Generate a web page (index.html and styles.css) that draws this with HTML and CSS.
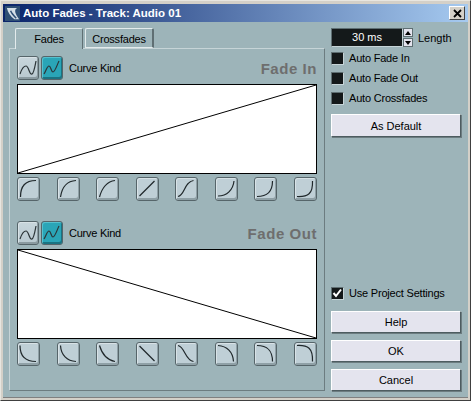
FILE: index.html
```html
<!DOCTYPE html>
<html lang="en">
<head>
	<meta charset="UTF-8">
	<title>Auto Fades - Track: Audio 01</title>
	<link rel="stylesheet" href="styles.css">
</head>
<body>
	<div class="window">
		<div class="titlebar">
			<svg class="titlebar__icon" viewBox="0 0 16 16">
				<rect width="16" height="16" fill="#2f4f74"/>
				<path d="M2 2 L13 2 C9 4 11 8 15 14 L10 14 C6 11 3 7 2 2 Z" fill="#d5dfe6"/>
				<path d="M6 5 C7 8 9 10 12 13" stroke="#2f4f74" stroke-width="1.6" fill="none"/>
			</svg>
			<div class="titlebar__text">Auto Fades - Track: Audio 01</div>
			<button class="titlebar__close">
				<svg viewBox="0 0 9 9" width="9" height="9"><path d="M1 1 L8 8 M8 1 L1 8" stroke="#000" stroke-width="1.8"/></svg>
			</button>
		</div>

		<div class="content">
			<div class="left">
				<div class="tabs">
					<div class="tab tab--active">Fades</div>
					<div class="tab">Crossfades</div>
				</div>
				<div class="panel">
					<div class="section">
						<div class="section__head">
							<button class="kind"><svg viewBox="1 1 20 22"><path d="M3 18 C5 12 7 10 9 10 C12 10 12 19 15 18 C17 17 18 10 19 5"/></svg></button>
							<button class="kind kind--on"><svg viewBox="1 1 20 22"><path d="M3 18 C5 15 6 10 8 10 C10 10 10 16 12 16 C14 16 16 9 18 5"/></svg></button>
							<div class="section__label">Curve Kind</div>
							<div class="section__title">Fade In</div>
						</div>
						<div class="graph">
							<svg viewBox="0 0 298 88" preserveAspectRatio="none"><line x1="0" y1="88" x2="298" y2="0"/></svg>
						</div>
						<div class="curves">
							<button class="curve"><svg viewBox="1 1 21 22"><path d="M3.5 20 C3.5 9 8 3.5 19 3.5"/></svg></button>
							<button class="curve"><svg viewBox="1 1 21 22"><path d="M3.5 20 C5 10 10 4 19 3.5"/></svg></button>
							<button class="curve"><svg viewBox="1 1 21 22"><path d="M3.5 20 C6 11 11 4.5 19 3.5"/></svg></button>
							<button class="curve"><svg viewBox="1 1 21 22"><path d="M3.5 19 L18.5 4"/></svg></button>
							<button class="curve"><svg viewBox="1 1 21 22"><path d="M3 19.5 C10 18 9 5 18.5 3.5"/></svg></button>
							<button class="curve"><svg viewBox="1 1 21 22"><path d="M3 19 C12 19 18 13 19 4"/></svg></button>
							<button class="curve"><svg viewBox="1 1 21 22"><path d="M3 19.5 C13 19.5 18.5 15 18.5 4"/></svg></button>
							<button class="curve"><svg viewBox="1 1 21 22"><path d="M3 19.5 C14 20 19 17 18.5 4"/></svg></button>
						</div>
					</div>

					<div class="section">
						<div class="section__head">
							<button class="kind"><svg viewBox="1 1 20 22"><path d="M3 18 C5 12 7 10 9 10 C12 10 12 19 15 18 C17 17 18 10 19 5"/></svg></button>
							<button class="kind kind--on"><svg viewBox="1 1 20 22"><path d="M3 18 C5 15 6 10 8 10 C10 10 10 16 12 16 C14 16 16 9 18 5"/></svg></button>
							<div class="section__label">Curve Kind</div>
							<div class="section__title">Fade Out</div>
						</div>
						<div class="graph">
							<svg viewBox="0 0 298 88" preserveAspectRatio="none"><line x1="0" y1="0" x2="298" y2="88"/></svg>
						</div>
						<div class="curves">
							<button class="curve"><svg viewBox="1 1 21 22"><path d="M3 3.5 C3 14 8 19.5 19 19.5"/></svg></button>
							<button class="curve"><svg viewBox="1 1 21 22"><path d="M3.5 3.5 C4 13 10 19 19 19.5"/></svg></button>
							<button class="curve"><svg viewBox="1 1 21 22"><path d="M3.5 3.5 C6 12 11 18 19 19.5"/></svg></button>
							<button class="curve"><svg viewBox="1 1 21 22"><path d="M3.5 4 L18.5 19"/></svg></button>
							<button class="curve"><svg viewBox="1 1 21 22"><path d="M3 3.5 C10 5 10 18 18.5 19.5"/></svg></button>
							<button class="curve"><svg viewBox="1 1 21 22"><path d="M3 3.5 C12 4 18 10 18.5 19.5"/></svg></button>
							<button class="curve"><svg viewBox="1 1 21 22"><path d="M3 3.5 C13 3.5 18.5 8 18.5 19.5"/></svg></button>
							<button class="curve"><svg viewBox="1 1 21 22"><path d="M3 3.5 C14 3 19 6 18.5 19.5"/></svg></button>
						</div>
					</div>
				</div>
			</div>

			<div class="right">
				<div class="right__top">
					<div class="length">
						<div class="length__value">30 ms</div>
						<div class="spinner">
							<div class="spinner__btn"><span class="arrow arrow--up"></span></div>
							<div class="spinner__btn"><span class="arrow arrow--down"></span></div>
						</div>
						<div class="length__label">Length</div>
					</div>
					<div class="check"><span class="check__box"></span>Auto Fade In</div>
					<div class="check"><span class="check__box"></span>Auto Fade Out</div>
					<div class="check"><span class="check__box"></span>Auto Crossfades</div>
					<button class="btn btn--default">As Default</button>
				</div>
				<div class="right__bottom">
					<div class="check check--project">
						<span class="check__box">
							<svg viewBox="0 0 12 12" width="12" height="12"><path d="M2.5 6 L5 9 L10 2.5" stroke="#fff" stroke-width="2" fill="none"/></svg>
						</span>Use Project Settings
					</div>
					<button class="btn">Help</button>
					<button class="btn">OK</button>
					<button class="btn">Cancel</button>
				</div>
			</div>
		</div>
	</div>
</body>
</html>
```

FILE: styles.css
```css
* {
	margin: 0;
	padding: 0;
	box-sizing: border-box;
	font-family: "Liberation Sans", Arial, sans-serif;
}

body {
	background: #d4d0c8;
	overflow: hidden;
}

button {
	display: block;
	color: #000;
}

.window {
	width: 471px;
	height: 401px;
	display: flex;
	flex-direction: column;
	background: #d4d0c8;
	border-style: solid;
	border-width: 1px;
	border-color: #e8e6e0 #404040 #404040 #e8e6e0;
	padding: 2px;
}

/* barra de titulo */
.titlebar {
	height: 18px;
	margin-top: 1px;
	display: flex;
	align-items: center;
	flex: none;
	background: linear-gradient(to right, #0a246a, #a6caf0);
	padding: 0 3px 0 2px;
}

.titlebar__icon {
	width: 15px;
	height: 15px;
	margin-right: 3px;
}

.titlebar__text {
	color: #fff;
	font-weight: bold;
	font-size: 11.5px;
	flex: 1;
}

.titlebar__close {
	width: 16px;
	height: 14px;
	background: #d4d0c8;
	border: 1px solid;
	border-color: #fff #404040 #404040 #fff;
	display: flex;
	align-items: center;
	justify-content: center;
}

/* contenido */
.content {
	flex: 1;
	display: flex;
	background: #9db4b9;
	padding: 6px 6px 0 6px;
	gap: 6px;
	border-bottom: 1px solid #808080;
}

.left {
	width: 316px;
	display: flex;
	flex-direction: column;
}

.tabs {
	display: flex;
	padding-left: 6px;
	gap: 2px;
	height: 20px;
	flex: none;
}

.tab {
	height: 20px;
	width: 69px;
	font-size: 11px;
	letter-spacing: -0.2px;
	text-align: center;
	line-height: 20px;
	border-style: solid;
	border-width: 1px 2px 1px 1px;
	border-color: #e3ebec #5f6f73 #e3ebec #e3ebec;
	border-radius: 2px 2px 0 0;
}

.tab--active {
	width: 68px;
	border-bottom: none;
	border-right: 1px solid #5f6f73;
	position: relative;
	height: 21px;
	z-index: 1;
	background: #9db4b9;
}

.panel {
	height: 343px;
	border-style: solid;
	border-width: 1px;
	border-color: #c6d4d7 #6c7c80 #6c7c80 #c6d4d7;
	padding: 7px 7px 0 7px;
	display: flex;
	flex-direction: column;
	gap: 20px;
}

.section__head {
	height: 24px;
	display: flex;
	align-items: center;
	gap: 2px;
}

.section__label {
	font-size: 11px;
	letter-spacing: -0.25px;
	margin-left: 4px;
	flex: 1;
}

.section__title {
	font-size: 15px;
	font-weight: bold;
	color: #6e6e6e;
	letter-spacing: 0.55px;
}

.kind {
	width: 22px;
	height: 24px;
	border: 1px solid #56656a;
	border-radius: 3px;
	background: linear-gradient(#c8d6dc, #b8c8cf);
	box-shadow: inset 1px 1px 0 #d8e2e6, inset -1px -2px 0 #8a9aa0;
}

.kind--on {
	background: #2aa5b7;
	box-shadow: inset 1px 1px 0 #55c0ce, inset -1px -2px 0 #1a7382;
}

.kind svg {
	display: block;
	width: 20px;
	height: 22px;
}

.kind path {
	stroke: #2c3538;
	stroke-width: 1.2;
	fill: none;
}

.graph {
	height: 90px;
	width: 300px;
	margin-top: 4px;
	background: #fff;
	border: 1px solid #000;
}

.graph svg {
	display: block;
	width: 298px;
	height: 88px;
}

.graph line {
	stroke: #000;
	stroke-width: 1;
}

.curves {
	margin-top: 3px;
	width: 300px;
	display: flex;
	justify-content: space-between;
}

.curve {
	width: 23px;
	height: 24px;
	border: 1px solid #56656a;
	border-radius: 3px;
	background: #bfcfd6;
	box-shadow: inset 1px 1px 0 #d8e2e6, inset -1px -2px 0 #8fa0a6;
}

.curve svg {
	display: block;
	width: 21px;
	height: 22px;
}

.curve path {
	stroke: #20282b;
	stroke-width: 1.2;
	fill: none;
}

/* columna derecha */
.right {
	width: 130px;
	display: flex;
	flex-direction: column;
	justify-content: space-between;
	padding-bottom: 6px;
}

.length {
	display: flex;
	align-items: center;
	height: 19px;
}

.length__value {
	width: 72px;
	height: 19px;
	background: #14191a;
	border: 1px solid;
	border-color: #5f6f73 #c6d4d7 #c6d4d7 #5f6f73;
	color: #fff;
	font-size: 11px;
	line-height: 17px;
	text-align: center;
}

.spinner {
	width: 10px;
	height: 19px;
	display: flex;
	flex-direction: column;
	gap: 1px;
}

.spinner__btn {
	flex: 1;
	background: #e4e4ee;
	border: 1px solid #5f6f73;
	display: flex;
	align-items: center;
	justify-content: center;
}

.arrow {
	width: 0;
	height: 0;
	border-left: 3px solid transparent;
	border-right: 3px solid transparent;
}

.arrow--up {
	border-bottom: 4px solid #000;
}

.arrow--down {
	border-top: 4px solid #000;
}

.length__label {
	font-size: 11px;
	margin-left: 5px;
}

.check {
	display: flex;
	align-items: center;
	font-size: 11px;
	letter-spacing: -0.2px;
	height: 12px;
	margin-top: 8px;
}

.length + .check {
	margin-top: 5px;
}

.check__box {
	width: 13px;
	height: 13px;
	background: #14191a;
	border: 1px solid;
	border-color: #5f6f73 #c6d4d7 #c6d4d7 #5f6f73;
	margin-right: 5px;
	display: block;
	flex: none;
}

.check__box svg {
	display: block;
	margin: -1px;
}

.check--project {
	margin: 0 0 12px 0;
}

.btn {
	width: 130px;
	height: 22px;
	background: #e4e4ee;
	font-size: 11px;
	border: 1px solid;
	border-color: #fff #4d5c60 #4d5c60 #fff;
	box-shadow: 1px 1px 0 #6c7c80;
}

.btn + .btn {
	margin-top: 7px;
}

.btn--default {
	margin-top: 10px;
	height: 23px;
}
```
